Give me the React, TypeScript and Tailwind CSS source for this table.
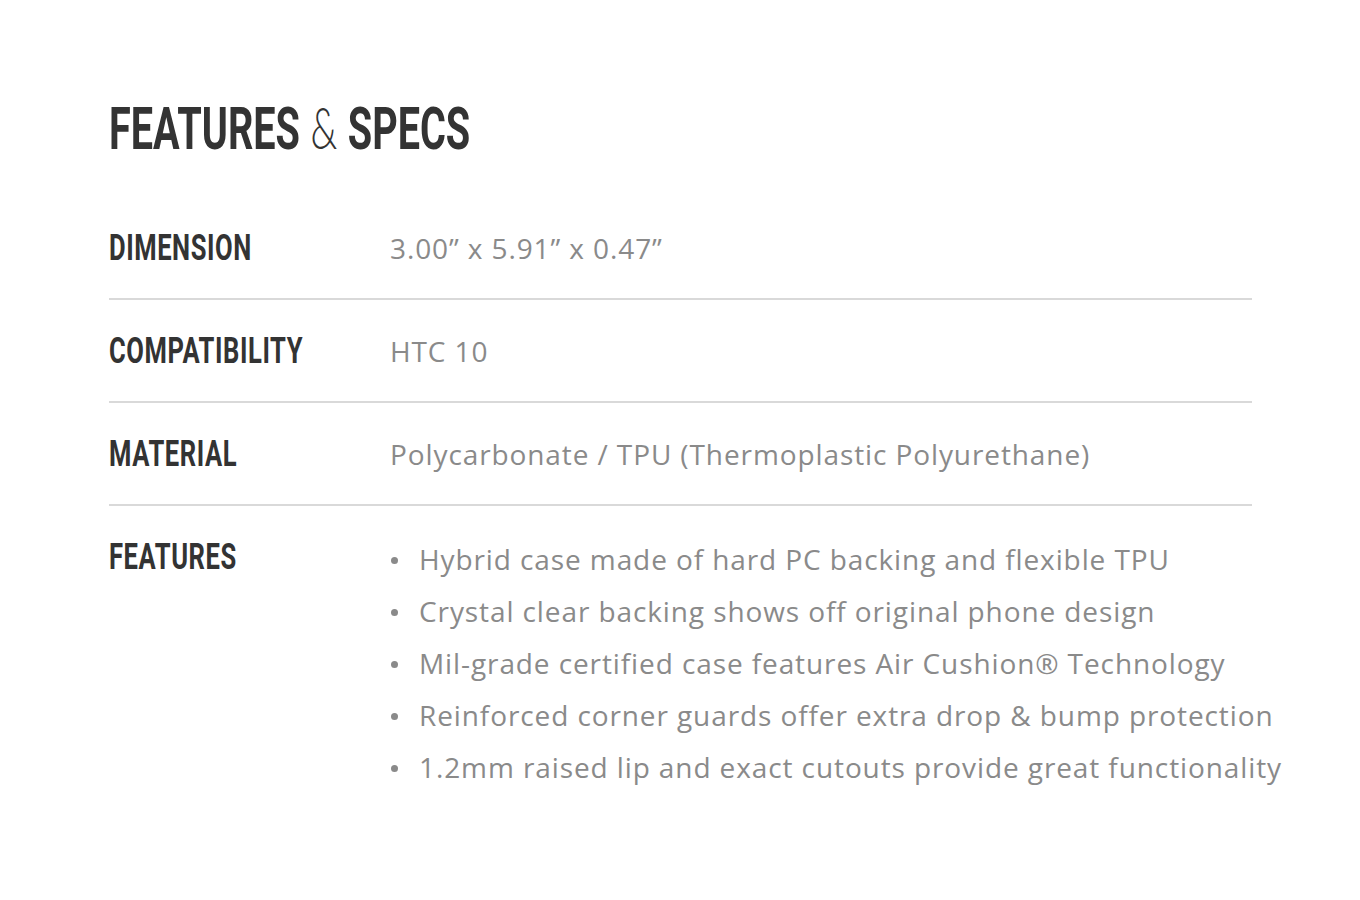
import React from "react";

const cond = "font-['Roboto','DejaVu_Sans',sans-serif] font-bold text-[#333333]";

function Label({ children }: { children: React.ReactNode }) {
  return (
    <div className="w-[281px] shrink-0 h-[52px] flex items-center">
      <span className={`${cond} inline-block origin-left scale-x-[0.71] text-[36px] leading-none whitespace-nowrap tracking-[0.8px]`}>
        {children}
      </span>
    </div>
  );
}

function Row({ label, children, last }: { label: string; children: React.ReactNode; last?: boolean }) {
  return (
    <div className={`flex items-start pt-[25px] pb-[24px] ${last ? "" : "border-b-2 border-[#d9d9d9]"}`}>
      <Label>{label}</Label>
      <div className="flex-1">{children}</div>
    </div>
  );
}

const valueCls = "font-['Open_Sans',sans-serif] text-[28px] tracking-[0.9px] leading-[52px] text-[#8a8a8a] whitespace-nowrap";

export default function App() {
  const features = [
    "Hybrid case made of hard PC backing and flexible TPU",
    "Crystal clear backing shows off original phone design",
    "Mil-grade certified case features Air Cushion® Technology",
    "Reinforced corner guards offer extra drop & bump protection",
    "1.2mm raised lip and exact cutouts provide great functionality",
  ];
  return (
    <div className="w-[1360px] h-[900px] bg-white overflow-hidden">
      <div className="pl-[109px] pt-[93px] w-[1252px]">
        <h1 className="h-[70px] flex items-center">
          <span className="inline-block origin-left scale-x-[0.66] whitespace-nowrap leading-none">
            <span className={`${cond} text-[60px]`}>FEATURES</span>
            <span className="font-['Lato',sans-serif] font-light text-[58px] text-[#333333] mx-[16px]">&amp;</span>
            <span className={`${cond} text-[60px]`}>SPECS</span>
          </span>
        </h1>
        <div className="mt-[34px]">
          <Row label="DIMENSION">
            <div className={valueCls}>3.00” x 5.91” x 0.47”</div>
          </Row>
          <Row label="COMPATIBILITY">
            <div className={valueCls}>HTC 10</div>
          </Row>
          <Row label="MATERIAL">
            <div className={valueCls}>Polycarbonate / TPU (Thermoplastic Polyurethane)</div>
          </Row>
          <Row label="FEATURES" last>
            <ul className="pt-[2px]">
              {features.map((f) => (
                <li key={f} className={`${valueCls} flex items-center`}>
                  <span className="w-[7px] h-[7px] rounded-full bg-[#8a8a8a] ml-[1px] mr-[21px] mt-[2px] shrink-0" />
                  {f}
                </li>
              ))}
            </ul>
          </Row>
        </div>
      </div>
    </div>
  );
}
